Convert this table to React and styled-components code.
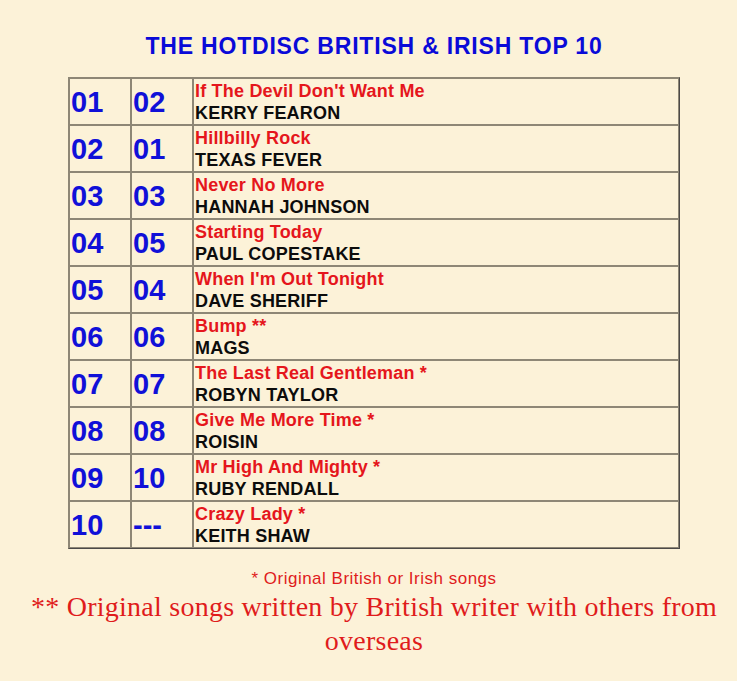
import React from 'react'
import styled, { createGlobalStyle } from 'styled-components'

const GlobalStyle = createGlobalStyle`
  html, body {
    margin: 0;
    padding: 0;
    background: #fcf2d8;
  }
  body {
    margin: 8px;
    font-family: "Liberation Sans", Arial, sans-serif;
  }
`

const Page = styled.div`
  padding-left: 11px;
  text-align: center;
`

const Title = styled.h1`
  margin: 25px 0 18px;
  font-size: 23px;
  line-height: 26px;
  letter-spacing: 0.8px;
  font-weight: bold;
  color: #0a0ad8;
`

const Chart = styled.table`
  margin: 0 auto;
  width: 612px;
  border-spacing: 0;
  border-collapse: separate;
  border: 1px solid;
  border-color: #8e8776 #4c4a48 #4c4a48 #8e8776;
  text-align: left;
`

const Cell = styled.td`
  border: 1px solid #8e8776;
  padding: 1px 1px 0;
  vertical-align: middle;
  width: ${p => p.$w || 'auto'};
`

const Pos = styled.span`
  display: block;
  font-size: 29px;
  line-height: 44px;
  font-weight: bold;
  color: #1010d8;
`

const Song = styled.div`
  font-size: 18px;
  line-height: 22px;
  letter-spacing: 0.2px;
  font-weight: bold;
  color: ${p => (p.$artist ? '#0c0c0c' : '#e5161c')};
`

const Note = styled.div`
  margin-top: 21px;
  font-size: 17px;
  line-height: 18px;
  letter-spacing: 0.5px;
  color: #e01c1c;
`

const BigNote = styled.div`
  margin-top: 2px;
  font-family: "Liberation Serif", "Times New Roman", serif;
  font-size: 28px;
  line-height: 34px;
  letter-spacing: 0.25px;
  color: #e01c1c;
`

const rows = [
  ['01', '02', "If The Devil Don't Want Me", 'KERRY FEARON'],
  ['02', '01', 'Hillbilly Rock', 'TEXAS FEVER'],
  ['03', '03', 'Never No More', 'HANNAH JOHNSON'],
  ['04', '05', 'Starting Today', 'PAUL COPESTAKE'],
  ['05', '04', "When I'm Out Tonight", 'DAVE SHERIFF'],
  ['06', '06', 'Bump **', 'MAGS'],
  ['07', '07', 'The Last Real Gentleman *', 'ROBYN TAYLOR'],
  ['08', '08', 'Give Me More Time *', 'ROISIN'],
  ['09', '10', 'Mr High And Mighty *', 'RUBY RENDALL'],
  ['10', '---', 'Crazy Lady *', 'KEITH SHAW'],
]

const App = () => {
  return (
    <Page>
      <GlobalStyle />
      <Title>THE HOTDISC BRITISH &amp; IRISH TOP 10</Title>
      <Chart>
        <tbody>
          {rows.map(([now, last, song, artist]) => (
            <tr key={now}>
              <Cell $w='58px'><Pos>{now}</Pos></Cell>
              <Cell $w='58px'><Pos>{last}</Pos></Cell>
              <Cell>
                <Song>{song}</Song>
                <Song $artist>{artist}</Song>
              </Cell>
            </tr>
          ))}
        </tbody>
      </Chart>
      <Note>* Original British or Irish songs</Note>
      <BigNote>** Original songs written by British writer with others from overseas</BigNote>
    </Page>
  )
}
export default App
